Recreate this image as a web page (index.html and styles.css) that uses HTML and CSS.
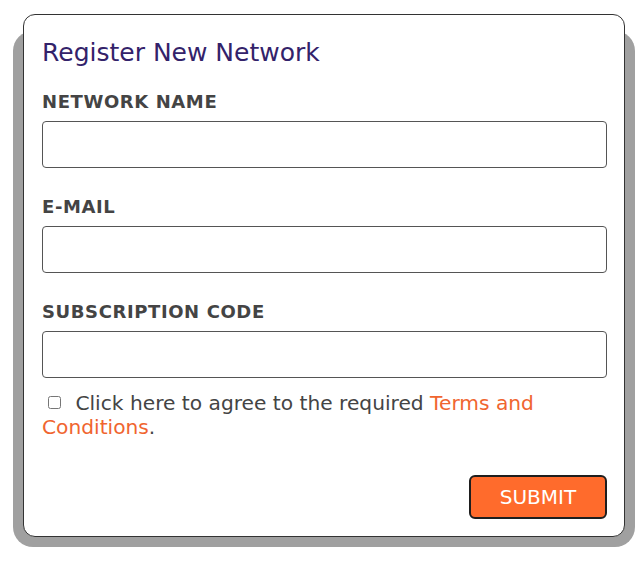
FILE: index.html
```html
<!DOCTYPE html>
<html lang="en">
<head>
<meta charset="utf-8">
<title>Register New Network</title>
<link rel="stylesheet" href="styles.css">
</head>
<body>
<div class="frame">
  <form class="card">
    <h1 class="title">Register New Network</h1>
    <label class="label" for="netname">NETWORK NAME</label>
    <input class="field" id="netname" type="text">
    <label class="label" for="email">E-MAIL</label>
    <input class="field" id="email" type="text">
    <label class="label" for="code">SUBSCRIPTION CODE</label>
    <input class="field" id="code" type="text">
    <p class="agree"><input class="check" type="checkbox"> Click here to agree to the required <a class="link" href="#">Terms and Conditions</a>.</p>
    <div class="actions"><button class="submit" type="button">SUBMIT</button></div>
  </form>
</div>
</body>
</html>
```
FILE: styles.css
```css
html {
  background: #ffffff;
}

body {
  margin: 0;
  padding: 14px 0 28px 0;
  font-family: "DejaVu Sans", Verdana, sans-serif;
  color: #444444;
}

.frame {
  position: relative;
  isolation: isolate;
  width: 602px;
  margin: 0 0 0 23px;
}

.frame::before {
  content: "";
  position: absolute;
  top: 17px;
  left: -10px;
  right: -10px;
  bottom: -10px;
  background: #a0a0a0;
  border-radius: 20px;
  z-index: 0;
}

.card {
  position: relative;
  z-index: 1;
  box-sizing: border-box;
  width: 602px;
  margin: 0;
  padding: 23px 17px 17px 18px;
  background: #ffffff;
  border: 1px solid #333333;
  border-radius: 12px;
  display: flex;
  flex-direction: column;
}

.title {
  margin: 0;
  font-size: 25px;
  line-height: 30px;
  font-weight: normal;
  color: #33226a;
}

.label {
  display: block;
  margin-top: 23px;
  font-size: 18px;
  line-height: 22px;
  font-weight: bold;
  letter-spacing: 0.6px;
  color: #444444;
}

.field {
  display: block;
  box-sizing: border-box;
  margin: 8px 0 0 0;
  width: 565px;
  height: 47px;
  border: 1px solid #555555;
  border-radius: 4px;
  background: #ffffff;
  font-size: 18px;
}

.field + .label {
  margin-top: 28px;
}

.agree {
  margin: 13px 0 0 0;
  font-size: 20.2px;
  line-height: 24px;
  color: #444444;
}

.check {
  width: 13px;
  height: 13px;
  margin: 0 8px 0 6px;
  vertical-align: 1px;
}

.link {
  color: #f0652f;
  text-decoration: none;
}

.actions {
  display: flex;
  justify-content: flex-end;
  margin-top: 36px;
}

.submit {
  box-sizing: border-box;
  width: 138px;
  height: 44px;
  border: 2px solid #1e1e1e;
  border-radius: 6px;
  background: #ff6b2c;
  color: #ffffff;
  font-family: "DejaVu Sans", Verdana, sans-serif;
  font-size: 20px;
  padding: 0;
}
```
